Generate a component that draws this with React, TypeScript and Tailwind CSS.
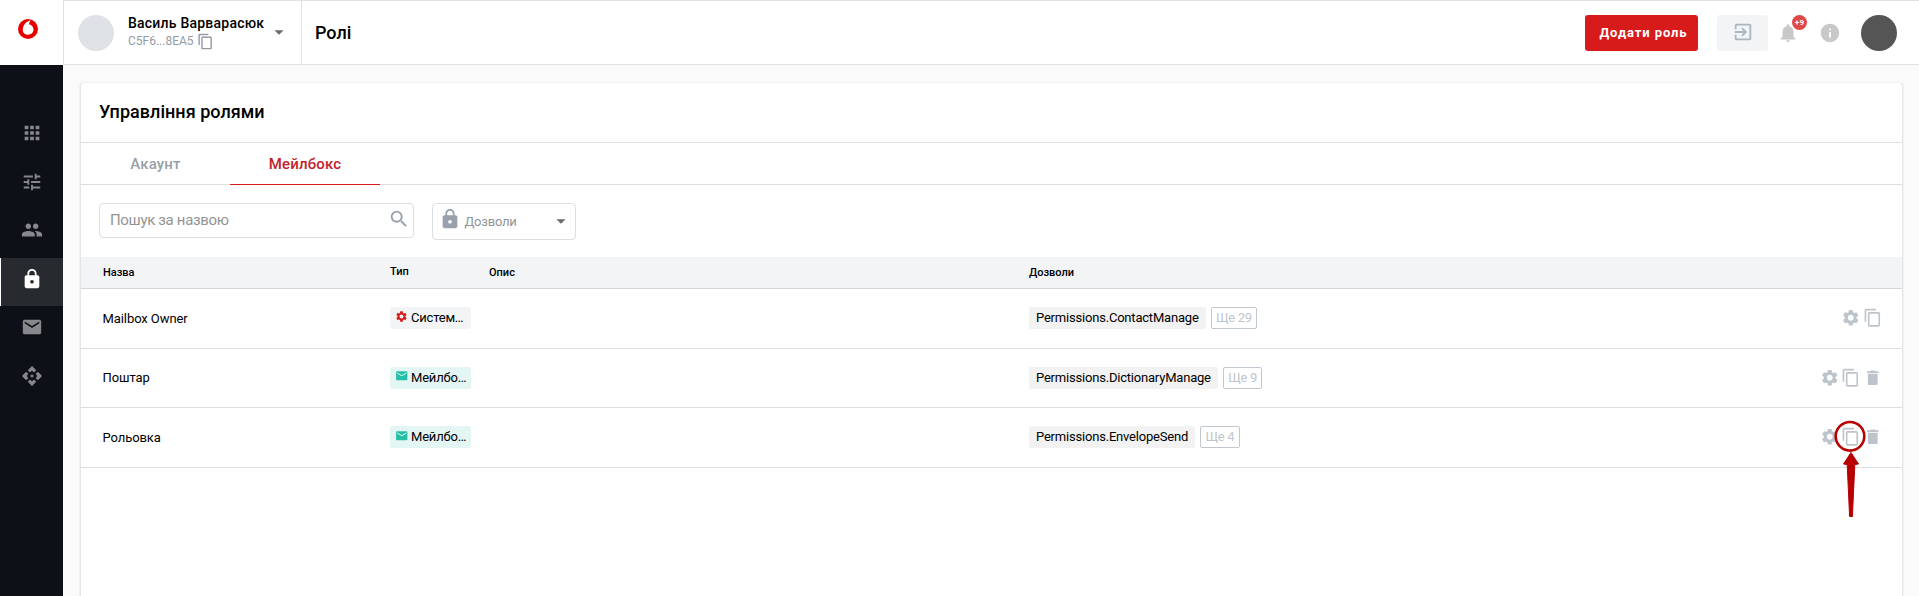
import React from "react";
import {
  MdApi, MdApps, MdArrowDropDown, MdContentCopy, MdDelete, MdEmail, MdExitToApp,
  MdInfo, MdLock, MdNotifications, MdPeople, MdSearch, MdSettings, MdTune,
} from "react-icons/md";

const nav = [MdApps, MdTune, MdPeople, MdLock, MdEmail, MdApi];

function Logo() {
  return (
    <svg width="20" height="20" viewBox="0 0 20 20">
      <circle cx="10" cy="10" r="10" fill="#e60000" />
      <path
        d="M4.8 11C4.8 6.2 8.3 2 13.2 1.3C11.8 2.3 11 3.8 11.1 5.3C13.8 5.9 15.5 8 15.5 10.6C15.5 13.7 13.2 15.8 10.2 15.8C7 15.8 4.8 13.7 4.8 11Z"
        fill="#fff"
      />
    </svg>
  );
}

function Sidebar() {
  return (
    <aside className="flex w-[63px] shrink-0 flex-col bg-[#0d1117]">
      <div className="flex h-[65px] shrink-0 bg-white pl-[18px] pt-[19px]">
        <Logo />
      </div>
      <nav className="mt-[47px] flex flex-col">
        {nav.map((Icon, i) => (
          <a
            key={i}
            className={
              i === 3
                ? "flex h-[48.5px] justify-center border-l border-white bg-[#272b2f] pt-[10px] text-white"
                : "flex h-[48.5px] justify-center pl-px pt-[10px] text-[#86888b]"
            }
          >
            <Icon className="size-[22px]" />
          </a>
        ))}
      </nav>
    </aside>
  );
}

function Header() {
  return (
    <header className="flex h-[65px] shrink-0 border border-r-0 border-[#dee2e6] bg-white">
      <div className="flex w-[238px] border-r border-[#dee2e6] pl-3.5 pt-3.5">
        <div className="size-9 rounded-full bg-[#dee2e6]" />
        <div className="ml-3.5 flex w-[136px] flex-col whitespace-nowrap">
          <div className="-mt-0.5 text-[14px] leading-5 font-medium tracking-[0.22px]">Василь Варварасюк</div>
          <div className="flex text-[12px] leading-4 text-[#939ca5]">
            <span className="w-[69px]">C5F6...8EA5</span>
            <MdContentCopy className="size-[17px]" />
          </div>
        </div>
        <MdArrowDropDown className="ml-[3.5px] mt-[5.5px] size-[22px] shrink-0 text-[#6b6b6b]" />
      </div>
      <h1 className="ml-[13px] mt-5 text-[18px] leading-6 font-medium">Ролі</h1>
      <div className="ml-auto flex items-start pt-3.5 pr-[22px]">
        <button className="h-9 w-[113px] rounded-[3px] bg-[#d71a1a] pl-1 text-[13px] font-bold tracking-[0.9px] text-white">
          Додати роль
        </button>
        <button className="ml-[19px] flex h-9 w-[51px] items-center justify-center rounded-[3px] bg-[#f2f4f6] pb-[3px] text-[#adb5bd]">
          <MdExitToApp className="size-[22px]" />
        </button>
        <div className="relative ml-[9px] mt-[6.5px]">
          <MdNotifications className="size-[22px] text-[#c8c8c8]" />
          <span className="absolute -top-[6.5px] left-[15px] flex size-[15px] items-center justify-center rounded-full bg-[#e04848] text-[8px] font-bold tracking-[0.3px] text-white">
            +9
          </span>
        </div>
        <MdInfo className="ml-5 mt-[6.5px] size-[22px] text-[#c8c8c8]" />
        <div className="ml-5 size-9 rounded-full bg-[#555]" />
      </div>
    </header>
  );
}

type Role = { name: string; system?: boolean; permission: string; more: number };

const roles: Role[] = [
  { name: "Mailbox Owner", system: true, permission: "Permissions.ContactManage", more: 29 },
  { name: "Поштар", permission: "Permissions.DictionaryManage", more: 9 },
  { name: "Рольовка", permission: "Permissions.EnvelopeSend", more: 4 },
];

function TypeChip({ system }: { system?: boolean }) {
  return (
    <span
      className={
        system
          ? "flex h-[22px] w-[81px] rounded-[2px] bg-[#f3f4f6] pl-[5px] leading-[22px]"
          : "flex h-[22px] w-[81px] rounded-[2px] bg-[#e4f6f4] pl-[5px] leading-[22px]"
      }
    >
      {system ? (
        <MdSettings className="mr-[3px] mt-[3px] size-[13px] text-[#d71a1a]" />
      ) : (
        <MdEmail className="mr-[2.5px] mt-[2.5px] size-[13.5px] text-[#25bfa6]" />
      )}
      {system ? "Систем…" : "Мейлбо…"}
    </span>
  );
}

function Row({ role }: { role: Role }) {
  return (
    <div className="flex h-[59.5px] items-center border-b border-[#dfdfdf] pl-[21.5px] pr-5 text-[13px] tracking-[-0.2px]">
      <div className="w-[287.5px] tracking-[-0.08px]">{role.name}</div>
      <div className="w-[639px]">
        <TypeChip system={role.system} />
      </div>
      <div className="flex gap-[5px]">
        <span className="h-[22px] rounded-[2px] bg-[#f2f2f2] px-[7px] leading-[22px]">{role.permission}</span>
        <span className="h-[22px] rounded-[2px] border border-[#c1c7ce] px-[4.5px] leading-5 tracking-[-0.35px] text-[#bfc5cb]">
          Ще {role.more}
        </span>
      </div>
      <div className="ml-auto flex gap-[2px] pb-px text-[#bdc4cc]">
        <MdSettings className="size-[19.5px]" />
        <MdContentCopy className="size-[19.5px]" />
        {!role.system && <MdDelete className="size-[19.5px]" />}
      </div>
    </div>
  );
}

function Pointer() {
  return (
    <svg className="absolute left-[1830px] top-[416px]" width="44" height="106" viewBox="0 0 44 106" fill="none">
      <circle cx="20" cy="20.3" r="14.3" stroke="#b80000" strokeWidth="2.6" />
      <path d="M21 36.5 L28.5 48 L24.8 48.5 L22.4 100.5 H19.6 L17.2 48.5 L13.5 48 Z" fill="#b80000" stroke="#b80000" strokeLinejoin="round" />
    </svg>
  );
}

export default function App() {
  return (
    <div className="relative flex h-[596px] w-full overflow-hidden bg-[#fafafa] font-[Roboto,sans-serif] text-black">
      <Sidebar />
      <div className="flex min-w-0 flex-1 flex-col">
        <Header />
        <main className="ml-[17px] mr-[16px] mt-[18px] h-[560px] shrink-0 rounded-t border-x border-[#e4e5e6] bg-white shadow-[0_0_2px_rgba(0,0,0,0.12)]">
          <h2 className="h-[60px] border-b border-[#dfdfdf] pl-[18px] pt-[17px] text-[18px] leading-6 font-medium tracking-[0.04px]">
            Управління ролями
          </h2>
          <div className="flex h-[42px] border-b border-[#dfdfdf] text-[15px] leading-[42px] font-medium tracking-[0.15px]">
            <div className="h-[42px] w-[149px] text-center text-[#979fa8]">Акаунт</div>
            <div className="h-[42px] w-[150px] border-b border-[#d71a1a] text-center text-[#c4232b]">Мейлбокс</div>
          </div>
          <div className="flex h-[72px] items-start pl-[18px] pt-[18px]">
            <div className="flex h-[35px] w-[315px] justify-between rounded border border-[#dcdfe2] pl-[10px] pr-[3px] text-[15px] leading-[33px] tracking-[-0.33px] text-[#939393]">
              Пошук за назвою
              <MdSearch className="mt-1 size-[22px] text-[#98a1ab]" />
            </div>
            <div className="ml-[18px] flex h-[37px] w-[144px] rounded border border-[#dcdfe2] pl-[6px] text-[13px] leading-[36px] tracking-[-0.2px] text-[#8f9499]">
              <MdLock className="mr-[3.5px] mt-[4px] size-[22px] text-[#98a1ab]" />
              Дозволи
              <MdArrowDropDown className="ml-auto mr-[3.5px] mt-[6px] size-[22px] text-[#6b6b6b]" />
            </div>
          </div>
          <div className="flex h-8 border-b border-[#d5d8db] bg-[#f3f4f6] pl-[22px] text-[11px] leading-[31px] font-medium">
            <div className="w-[287px]">Назва</div>
            <div className="w-[99px] leading-[29px]">Тип</div>
            <div className="w-[540px]">Опис</div>
            <div>Дозволи</div>
          </div>
          {roles.map((r) => (
            <Row key={r.name} role={r} />
          ))}
        </main>
      </div>
      <Pointer />
    </div>
  );
}
